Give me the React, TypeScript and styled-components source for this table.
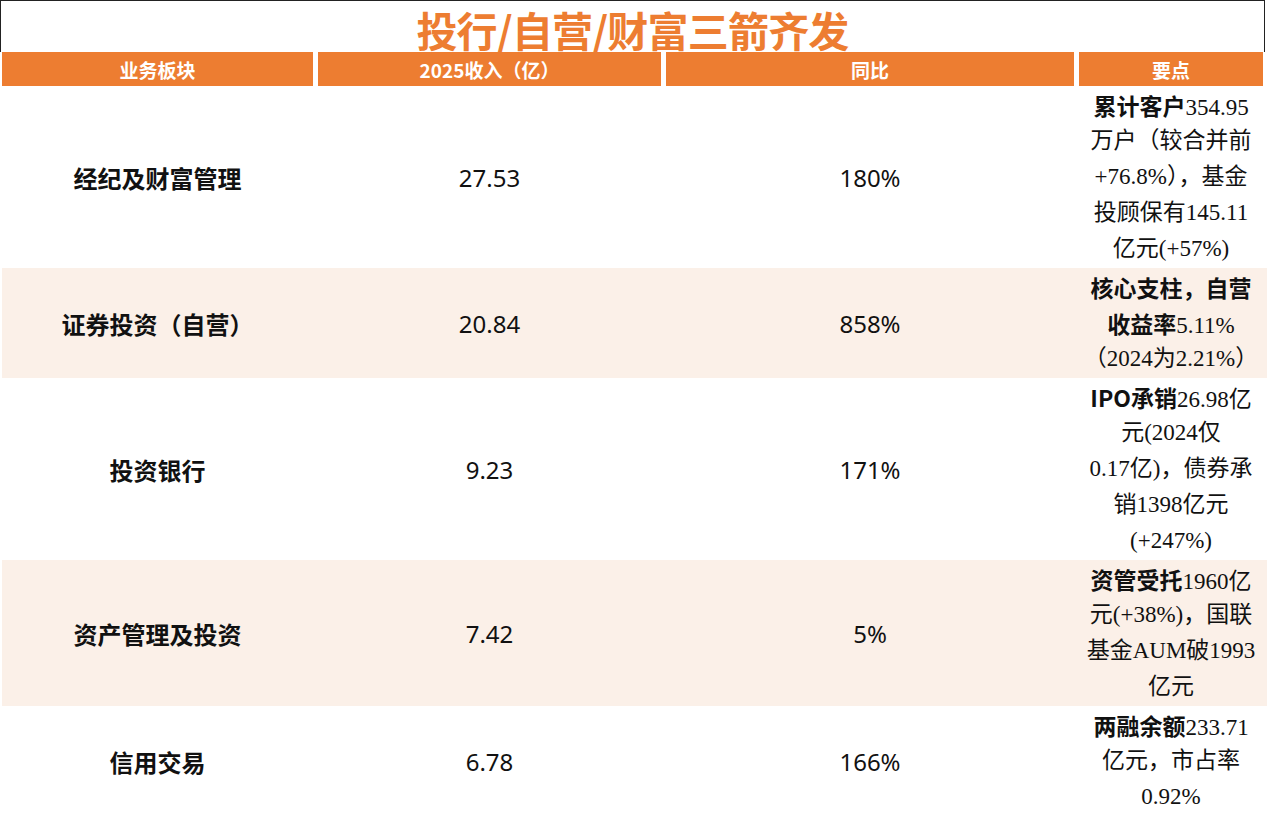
import React from 'react';
import styled, { createGlobalStyle } from 'styled-components';

const GlobalStyle = createGlobalStyle`
  html, body {
    margin: 0;
    padding: 0;
    background: #fff;
  }
  body {
    font-family: "Noto Sans", "Noto Sans CJK SC", sans-serif;
    color: #111;
    overflow: hidden;
  }
`;

const ORANGE = '#ED7D31';
const SHADE = '#FBF0E8';
const COLUMNS = '311px 343px 408px 184px';

const Page = styled.div`
  width: 1267px;
  height: 817px;
  overflow: hidden;
`;

const TitleBar = styled.div`
  height: 52px;
  box-sizing: border-box;
  border: 1.5px solid #222;
  border-bottom: none;
  margin-right: 2px;
  display: flex;
  align-items: flex-end;
  justify-content: center;
`;

const Title = styled.h1`
  margin: 0 0 1px;
  font-family: "Noto Sans CJK SC", sans-serif;
  font-size: 41px;
  font-weight: 700;
  line-height: 44px;
  color: ${ORANGE};
  letter-spacing: -0.8px;
`;

const HeaderRow = styled.div`
  display: grid;
  grid-template-columns: ${COLUMNS};
  column-gap: 5px;
  margin-left: 2px;
  height: 34px;
`;

const HeaderCell = styled.div`
  background: ${ORANGE};
  color: #fff;
  display: flex;
  align-items: center;
  justify-content: center;
  font-family: "Noto Sans CJK SC", sans-serif;
  font-size: 19px;
  font-weight: 700;
`;

const Row = styled.div<{ $shaded?: boolean }>`
  display: grid;
  grid-template-columns: ${COLUMNS};
  column-gap: 5px;
  margin-left: 2px;
  padding: 1px 0;
  background: ${(p) => (p.$shaded ? SHADE : '#fff')};
`;

const Cell = styled.div`
  display: flex;
  align-items: center;
  justify-content: center;
  text-align: center;
`;

const Segment = styled(Cell)`
  font-family: "Noto Sans CJK SC", sans-serif;
  font-size: 24px;
  font-weight: 700;
  color: #111;
`;

const Figure = styled(Cell)`
  font-family: "Noto Sans", "Open Sans", sans-serif;
  font-size: 24px;
  color: #111;
`;

const Notes = styled.div`
  display: flex;
  flex-direction: column;
  align-items: center;
  justify-content: center;
`;

const NoteLine = styled.span`
  display: block;
  height: 36px;
  white-space: nowrap;
  line-height: 36px;
  font-family: "Liberation Serif", "Noto Sans CJK SC", serif;
  font-size: 23px;
  color: #111;
`;

const Lead = styled.b`
  font-family: "Noto Sans CJK SC", sans-serif;
  font-weight: 700;
`;

type Line = { lead?: string; text?: string };

type Item = {
  segment: string;
  revenue: string;
  yoy: string;
  notes: Line[];
};

const items: Item[] = [
  {
    segment: '经纪及财富管理',
    revenue: '27.53',
    yoy: '180%',
    notes: [
      { lead: '累计客户', text: '354.95' },
      { text: '万户（较合并前' },
      { text: '+76.8%），基金' },
      { text: '投顾保有145.11' },
      { text: '亿元(+57%)' },
    ],
  },
  {
    segment: '证券投资（自营）',
    revenue: '20.84',
    yoy: '858%',
    notes: [
      { lead: '核心支柱，自营' },
      { lead: '收益率', text: '5.11%' },
      { text: '（2024为2.21%）' },
    ],
  },
  {
    segment: '投资银行',
    revenue: '9.23',
    yoy: '171%',
    notes: [
      { lead: 'IPO承销', text: '26.98亿' },
      { text: '元(2024仅' },
      { text: '0.17亿)，债券承' },
      { text: '销1398亿元' },
      { text: '(+247%)' },
    ],
  },
  {
    segment: '资产管理及投资',
    revenue: '7.42',
    yoy: '5%',
    notes: [
      { lead: '资管受托', text: '1960亿' },
      { text: '元(+38%)，国联' },
      { text: '基金AUM破1993' },
      { text: '亿元' },
    ],
  },
  {
    segment: '信用交易',
    revenue: '6.78',
    yoy: '166%',
    notes: [
      { lead: '两融余额', text: '233.71' },
      { text: '亿元，市占率' },
      { text: '0.92%' },
    ],
  },
];

function App() {
  return (
    <Page>
      <GlobalStyle />
      <TitleBar>
        <Title>投行/自营/财富三箭齐发</Title>
      </TitleBar>
      <HeaderRow>
        <HeaderCell>业务板块</HeaderCell>
        <HeaderCell>2025收入（亿）</HeaderCell>
        <HeaderCell>同比</HeaderCell>
        <HeaderCell>要点</HeaderCell>
      </HeaderRow>
      {items.map((item, i) => (
        <Row key={item.segment} $shaded={i % 2 === 1}>
          <Segment>{item.segment}</Segment>
          <Figure>{item.revenue}</Figure>
          <Figure>{item.yoy}</Figure>
          <Notes>
            {item.notes.map((line, j) => (
              <NoteLine key={j}>
                {line.lead && <Lead>{line.lead}</Lead>}
                {line.text}
              </NoteLine>
            ))}
          </Notes>
        </Row>
      ))}
    </Page>
  );
}

export default App;
